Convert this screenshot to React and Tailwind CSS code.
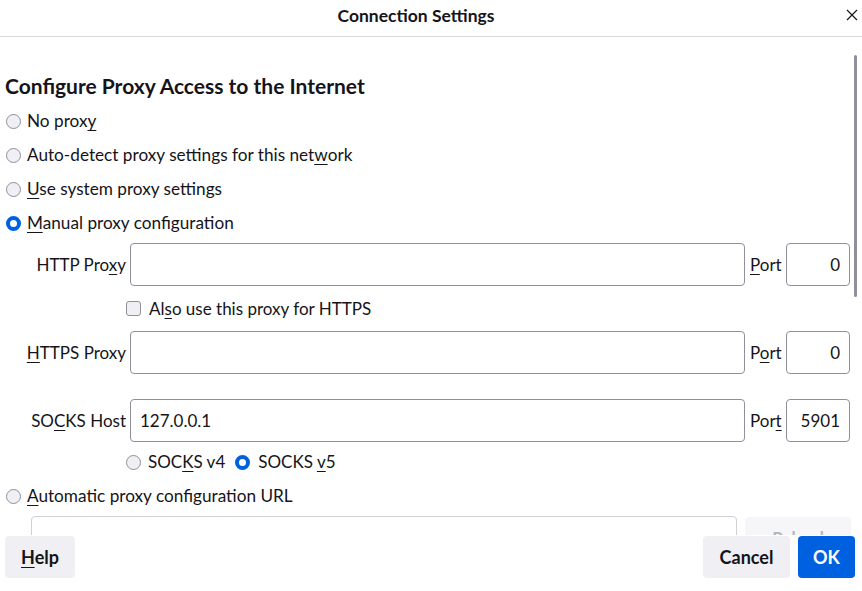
import React from 'react';

const FONT = { fontFamily: 'Lato, "Noto Sans", "Liberation Sans", sans-serif' };

const U = ({ children }) => (
  <span className="underline underline-offset-[3px] decoration-1">{children}</span>
);

const Radio = ({ checked }) =>
  checked ? (
    <span className="inline-block w-[15px] h-[15px] rounded-full border-[4px] border-[#0061e0] bg-white shrink-0" />
  ) : (
    <span className="inline-block w-[15px] h-[15px] rounded-full border border-[#8f8f9d] bg-[#f0f0f4] shrink-0" />
  );

const Field = ({ value, right, className = '' }) => (
  <div
    className={`h-[43px] rounded-[4px] border border-[#8f8f9d] bg-white flex items-center px-[9px] text-[17px] text-[#15141a] ${
      right ? 'justify-end' : ''
    } ${className}`}
  >
    {value}
  </div>
);

const ProxyRow = ({ label, port, host }) => (
  <div className="grid grid-cols-[121px_615px_33px_64px] gap-x-[4px] items-center">
    <span className="text-right text-[17px]">{label}</span>
    <Field value={host} className="pl-[9px]" />
    <span className="text-[17px] pl-[1px]">{port[0]}</span>
    <Field value={port[1]} right />
  </div>
);

export default function App() {
  return (
    <div className="w-[862px] h-[591px] bg-white text-[#15141a] flex flex-col overflow-hidden" style={FONT}>
      {/* Header */}
      <div className="h-[37px] shrink-0 border-b border-[#d7d7db] flex items-center justify-center relative pr-[30px] pb-[4px]">
        <span className="text-[17.5px] font-bold">Connection Settings</span>
        <svg className="absolute right-[4px] top-[9px]" width="12" height="12" viewBox="0 0 12 12">
          <path d="M1 1L11 11M11 1L1 11" stroke="#15141a" strokeWidth="1.2" />
        </svg>
      </div>

      {/* Scroll area */}
      <div className="h-[498px] shrink-0 overflow-hidden relative">
        <div className="absolute right-[5px] top-[18px] w-[3px] h-[242px] rounded-full bg-[#8f8f9d]" />
        <div className="pl-[5px] pr-[10px]">
          <h1 className="mt-[37px] h-[24px] leading-[24px] text-[21px] font-bold">
            Configure Proxy Access to the Internet
          </h1>

          <div className="mt-[6px] text-[17.2px]">
            <label className="h-[34px] flex items-center gap-[6px] pl-[1px]">
              <Radio />
              <span>No prox<U>y</U></span>
            </label>
            <label className="h-[34px] flex items-center gap-[6px] pl-[1px]">
              <Radio />
              <span>Auto-detect proxy settings for this net<U>w</U>ork</span>
            </label>
            <label className="h-[34px] flex items-center gap-[6px] pl-[1px]">
              <Radio />
              <span><U>U</U>se system proxy settings</span>
            </label>
            <label className="h-[34px] flex items-center gap-[6px] pl-[1px]">
              <Radio checked />
              <span><U>M</U>anual proxy configuration</span>
            </label>
          </div>

          <div className="mt-[3px]">
            <ProxyRow label={<>HTTP Pro<U>x</U>y</>} port={[<><U>P</U>ort</>, '0']} />
            <div className="h-[45px] flex items-center gap-[8px] pl-[121px] text-[17px]">
              <span className="inline-block w-[15px] h-[15px] rounded-[3px] border border-[#8f8f9d] bg-[#f0f0f4]" />
              <span>Al<U>s</U>o use this proxy for HTTPS</span>
            </div>
            <ProxyRow label={<><U>H</U>TTPS Proxy</>} port={[<>P<U>o</U>rt</>, '0']} />
            <div className="mt-[25px]">
              <ProxyRow label={<>SO<U>C</U>KS Host</>} host="127.0.0.1" port={[<>Por<U>t</U></>, '5901']} />
            </div>
            <div className="h-[40px] flex items-center pl-[121px] text-[17px]">
              <label className="flex items-center gap-[7px]">
                <Radio />
                <span>SOC<U>K</U>S v4</span>
              </label>
              <label className="flex items-center gap-[8px] ml-[10px]">
                <Radio checked />
                <span>SOCKS <U>v</U>5</span>
              </label>
            </div>
          </div>

          <label className="h-[28px] flex items-center gap-[6px] pl-[1px] text-[17.2px]">
            <Radio />
            <span><U>A</U>utomatic proxy configuration URL</span>
          </label>

          <div className="mt-[6px] flex items-start pl-[26px]">
            <div className="w-[706px] h-[43px] rounded-[4px] border border-[#cfcfd8] bg-white" />
            <div className="ml-[8px] mt-[1px] w-[106px] h-[42px] rounded-[4px] bg-[#f6f6f8] flex items-center justify-center text-[17px] font-bold text-[#b5b5bb]">
              Reload
            </div>
          </div>
        </div>
      </div>

      {/* Footer */}
      <div className="flex items-start pl-[5px] pr-[7px] pt-[1px]">
        <button className="w-[70px] h-[42px] rounded-[4px] bg-[#f0f0f4] text-[18px] font-bold">
          <U>H</U>elp
        </button>
        <div className="flex-1" />
        <button className="w-[87px] h-[42px] rounded-[4px] bg-[#f0f0f4] text-[18px] font-bold">
          Cancel
        </button>
        <button className="ml-[8px] w-[57px] h-[42px] rounded-[4px] bg-[#0061e0] text-white text-[18px] font-bold">
          OK
        </button>
      </div>
    </div>
  );
}
